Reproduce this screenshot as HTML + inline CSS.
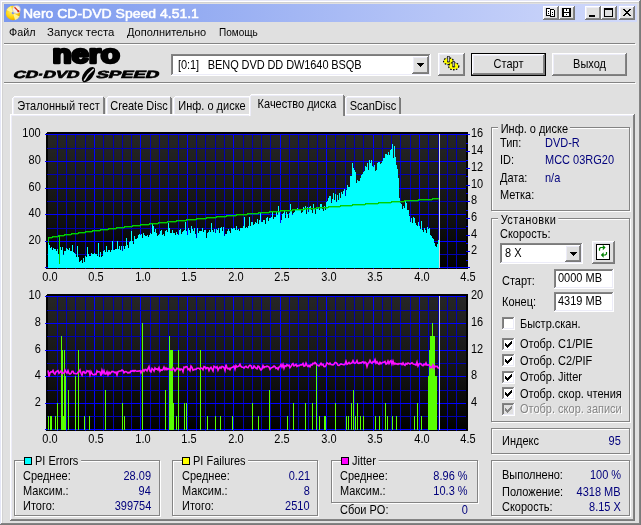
<!DOCTYPE html>
<html><head><meta charset="utf-8"><title>Nero CD-DVD Speed 4.51.1</title><style>html,body{margin:0;padding:0}
body{width:641px;height:525px;overflow:hidden;background:#e0e0e0;font:11px "Liberation Sans",sans-serif;position:relative;color:#000}
.a{position:absolute}
.t{position:absolute;white-space:pre;line-height:13px;height:13px;font-size:12.4px;transform:scaleX(0.8871);transform-origin:0 0}
.t.r{transform-origin:100% 0}
.t.c{transform-origin:50% 0}
.arrow{position:absolute;width:0;height:0;border-left:4px solid transparent;border-right:4px solid transparent;border-top:4px solid #000}
</style></head><body>
<div id="w" style="position:absolute;left:0;top:0;width:641px;height:525px;will-change:transform;opacity:0.999">
<div class="a" style="left:0;top:0;width:641px;height:525px;box-shadow:inset -1px -1px 0 #7a7a7a,inset 1px 1px 0 #e4e6f6,inset -2px -2px 0 #848484,inset 2px 2px 0 #ffffff;"></div>
<div class="a" style="left:2px;top:2px;width:1px;height:521px;background:#d2d2d2"></div>
<div class="a" style="left:2px;top:2px;width:637px;height:1px;background:#d2d2d2"></div>
<div class="a" style="left:4px;top:4px;width:633px;height:18px;background:linear-gradient(to right,#7a98ee 0%,#d2dafb 100%);"></div>
<svg class="a" style="left:5px;top:4px" width="18" height="18" viewBox="0 0 18 18">
<defs><radialGradient id="dg" cx="0.4" cy="0.4" r="0.7"><stop offset="0" stop-color="#fff080"/><stop offset="0.6" stop-color="#ffd000"/><stop offset="1" stop-color="#d89800"/></radialGradient></defs>
<circle cx="8" cy="9" r="7.2" fill="url(#dg)"/>
<path d="M8 9 L1.5 6 A7.2 7.2 0 0 1 6 2.2 Z" fill="#fff8a0" opacity="0.9"/>
<path d="M8 9 L14.5 12.5 A7.2 7.2 0 0 1 10 16 Z" fill="#fff8a0" opacity="0.9"/>
<circle cx="8" cy="9" r="1.3" fill="#8098e0"/>
<circle cx="11.5" cy="5.5" r="3.9" fill="#f4f0ec" stroke="#c8c0b8" stroke-width="0.6"/>
<path d="M9.5 3.2 L13.6 7.4" stroke="#e03010" stroke-width="1.3"/>
<circle cx="13.4" cy="7.2" r="1" fill="#d02010"/>
</svg>
<div class="a" style="left:23px;top:6px;height:16px;line-height:16px;font-weight:normal;font-size:13.6px;-webkit-text-stroke:0.55px #fff;color:#fff;white-space:pre;transform:scaleX(1.03);transform-origin:0 0">Nero CD-DVD Speed 4.51.1</div>
<div class="a " style="left:543px;top:6px;width:16px;height:14px;box-shadow:inset -1px -1px 0 #7a7a7a,inset 1px 1px 0 #ffffff,inset -2px -2px 0 #848484,inset 2px 2px 0 #ececf8;background:#e0e0e0;"><svg class="a" style="left:0;top:0" width="16" height="14" viewBox="0 0 16 14" shape-rendering="crispEdges"><path d="M3.5 2.5h3l1 1v6h-4z" fill="#fff" stroke="#000"/><path d="M7.5 3.5h3l1 1v6h-4z" fill="#fff" stroke="#000"/><path d="M5 5h1M5 7h1M9 6h1M9 8h1" stroke="#000"/></svg></div>
<div class="a " style="left:559px;top:6px;width:16px;height:14px;box-shadow:inset -1px -1px 0 #7a7a7a,inset 1px 1px 0 #ffffff,inset -2px -2px 0 #848484,inset 2px 2px 0 #ececf8;background:#e0e0e0;"><svg class="a" style="left:0;top:0" width="16" height="14" viewBox="0 0 16 14" shape-rendering="crispEdges"><rect x="3" y="2" width="9" height="9" fill="#000"/><rect x="5" y="3" width="5" height="3" fill="#fff"/><rect x="7" y="2" width="1" height="3" fill="#000"/><rect x="5" y="7" width="5" height="3" fill="#fff"/><rect x="7" y="8" width="1" height="1" fill="#000"/></svg></div>
<div class="a " style="left:585px;top:6px;width:16px;height:14px;box-shadow:inset -1px -1px 0 #7a7a7a,inset 1px 1px 0 #ffffff,inset -2px -2px 0 #848484,inset 2px 2px 0 #ececf8;background:#e0e0e0;"><div class="a" style="left:4px;top:9px;width:6px;height:2px;background:#000"></div></div>
<div class="a " style="left:601px;top:6px;width:16px;height:14px;box-shadow:inset -1px -1px 0 #7a7a7a,inset 1px 1px 0 #ffffff,inset -2px -2px 0 #848484,inset 2px 2px 0 #ececf8;background:#e0e0e0;"><div class="a" style="left:3px;top:2px;width:9px;height:9px;box-sizing:border-box;border:1px solid #000;border-top-width:2px"></div></div>
<div class="a " style="left:619px;top:6px;width:16px;height:14px;box-shadow:inset -1px -1px 0 #7a7a7a,inset 1px 1px 0 #ffffff,inset -2px -2px 0 #848484,inset 2px 2px 0 #ececf8;background:#e0e0e0;"><svg class="a" style="left:0;top:0" width="16" height="14" viewBox="0 0 16 14" shape-rendering="crispEdges"><path d="M4 3h2v1h1v1h2v-1h1v-1h2v1h-1v1h-1v1h-1v1h1v1h1v1h1v1h-2v-1h-1v-1h-2v1h-1v1h-2v-1h1v-1h1v-1h1v-1h-1v-1h-1v-1h-1z" fill="#000"/></svg></div>
<div class="t" style="left:9px;top:26px;font-size:11.4px;transform:scaleX(0.946)">Файл</div>
<div class="t" style="left:47px;top:26px;font-size:11.4px;transform:scaleX(1.0)">Запуск теста</div>
<div class="t" style="left:127px;top:26px;font-size:11.4px;transform:scaleX(0.966)">Дополнительно</div>
<div class="t" style="left:219px;top:26px;font-size:11.4px;transform:scaleX(0.882)">Помощь</div>
<div class="a" style="left:4px;top:43px;width:631px;height:1px;background:#848484"></div>
<div class="a" style="left:4px;top:44px;width:632px;height:1px;background:#fff"></div>
<div class="a" style="left:4px;top:82px;width:631px;height:1px;background:#848484"></div>
<div class="a" style="left:4px;top:83px;width:632px;height:1px;background:#fff"></div>
<svg class="a" style="left:0;top:44px" width="170" height="40" viewBox="0 44 170 40">
<text x="52.4" y="62.7" font-family="Liberation Sans, sans-serif" font-weight="bold" font-size="25" textLength="67.5" lengthAdjust="spacingAndGlyphs" stroke="#000" stroke-width="2.7" stroke-linejoin="round" fill="#000">nero</text>
<g transform="translate(0,78.4) skewX(-20)" stroke="#000" stroke-width="0.7">
<text x="12.4" y="0" font-family="Liberation Sans, sans-serif" font-weight="bold" font-size="10.4" textLength="66" lengthAdjust="spacingAndGlyphs" fill="#000">CD·DVD</text>
<text x="95.6" y="0" font-family="Liberation Sans, sans-serif" font-weight="bold" font-size="10.4" textLength="62.5" lengthAdjust="spacingAndGlyphs" fill="#000">SPEED</text>
</g>
<g transform="translate(88.5,74.6) rotate(38)"><ellipse cx="0" cy="0" rx="4.6" ry="9" fill="#000"/><path d="M0.8 -7.5 Q-1 0 0.3 7.5" stroke="#e0e0e0" stroke-width="1.5" fill="none"/></g>
</svg>
<div class="a " style="left:171px;top:54px;width:260px;height:22px;box-shadow:inset -1px -1px 0 #ffffff,inset 1px 1px 0 #848484,inset -2px -2px 0 #ececf8,inset 2px 2px 0 #7a7a7a;background:#fff;"></div>
<div class="t " style="left:178px;top:59px;color:#000;letter-spacing:-0.1px;">[0:1]&nbsp;&nbsp;&nbsp;BENQ DVD DD DW1640 BSQB</div>
<div class="a " style="left:412px;top:56px;width:17px;height:18px;box-shadow:inset -1px -1px 0 #7a7a7a,inset 1px 1px 0 #ffffff,inset -2px -2px 0 #848484,inset 2px 2px 0 #ececf8;background:#e0e0e0;"><svg class="a" style="left:5px;top:7px" width="7" height="4" viewBox="0 0 7 4" shape-rendering="crispEdges"><path d="M0 0h7v1h-1v1h-1v1h-1v1h-1v-1h-1v-1h-1v-1h-1z" fill="#000"/></svg></div>
<div class="a " style="left:438px;top:53px;width:27px;height:23px;box-shadow:inset -1px -1px 0 #7a7a7a,inset 1px 1px 0 #ffffff,inset -2px -2px 0 #848484,inset 2px 2px 0 #ececf8;background:#e0e0e0;"><svg class="a" style="left:0;top:0" width="27" height="23" viewBox="0 0 27 23">
<ellipse cx="10.5" cy="8.2" rx="4.6" ry="3.1" fill="#ffff00" stroke="#000" stroke-width="1.8" stroke-dasharray="1.5 1.2"/>
<ellipse cx="10.5" cy="8.2" rx="4.2" ry="2.7" fill="#ffff00"/>
<ellipse cx="10.5" cy="8.6" rx="1.6" ry="1" fill="#404000"/>
<rect x="9.6" y="3.4" width="1.8" height="5.4" fill="#c8c8d4" stroke="#282828" stroke-width="0.7"/>
<ellipse cx="15.7" cy="13.2" rx="4.8" ry="3.3" fill="#ffff00" stroke="#000" stroke-width="1.8" stroke-dasharray="1.5 1.2"/>
<ellipse cx="15.7" cy="13.2" rx="4.4" ry="2.9" fill="#ffff00"/>
<ellipse cx="15.7" cy="13.6" rx="1.6" ry="1" fill="#404000"/>
<rect x="14.8" y="8.4" width="1.8" height="5.4" fill="#c8c8d4" stroke="#282828" stroke-width="0.7"/>
</svg></div>
<div class="a " style="left:471px;top:53px;width:75px;height:23px;background:#000;"></div>
<div class="a " style="left:472px;top:54px;width:73px;height:21px;box-shadow:inset -1px -1px 0 #7a7a7a,inset 1px 1px 0 #ffffff,inset -2px -2px 0 #848484,inset 2px 2px 0 #ececf8;background:#e0e0e0;"></div>
<div class="t c" style="left:472px;width:73px;text-align:center;top:58px;">Старт</div>
<div class="a " style="left:552px;top:53px;width:75px;height:23px;box-shadow:inset -1px -1px 0 #7a7a7a,inset 1px 1px 0 #ffffff,inset -2px -2px 0 #848484,inset 2px 2px 0 #ececf8;background:#e0e0e0;"></div>
<div class="t c" style="left:552px;width:75px;text-align:center;top:58px;">Выход</div>
<div class="a" style="left:10px;top:114px;width:625px;height:407px;background:#e0e0e0;box-shadow:inset -1px -1px 0 #7a7a7a,inset 1px 1px 0 #ffffff,inset -2px -2px 0 #848484,inset 2px 2px 0 #ececf8;"></div>
<div class="a" style="left:12px;top:96px;width:93px;height:18px;background:#e0e0e0;box-shadow:inset -1px 0 0 #7a7a7a,inset 1px 1px 0 #ffffff,inset -2px 0 0 #848484,inset 2px 2px 0 #ececf8;"></div>
<div class="a" style="left:12px;top:96px;width:2px;height:2px;background:#e0e0e0"></div><div class="a" style="left:13px;top:97px;width:1px;height:1px;background:#ffffff"></div>
<div class="a" style="left:103px;top:96px;width:2px;height:2px;background:#e0e0e0"></div><div class="a" style="left:103px;top:97px;width:1px;height:1px;background:#7a7a7a"></div>
<div class="t c" style="left:12px;width:93px;text-align:center;top:100px;">Эталонный тест</div>
<div class="a" style="left:106px;top:96px;width:66px;height:18px;background:#e0e0e0;box-shadow:inset -1px 0 0 #7a7a7a,inset 1px 1px 0 #ffffff,inset -2px 0 0 #848484,inset 2px 2px 0 #ececf8;"></div>
<div class="a" style="left:106px;top:96px;width:2px;height:2px;background:#e0e0e0"></div><div class="a" style="left:107px;top:97px;width:1px;height:1px;background:#ffffff"></div>
<div class="a" style="left:170px;top:96px;width:2px;height:2px;background:#e0e0e0"></div><div class="a" style="left:170px;top:97px;width:1px;height:1px;background:#7a7a7a"></div>
<div class="t c" style="left:106px;width:66px;text-align:center;top:100px;">Create Disc</div>
<div class="a" style="left:173px;top:96px;width:78px;height:18px;background:#e0e0e0;box-shadow:inset -1px 0 0 #7a7a7a,inset 1px 1px 0 #ffffff,inset -2px 0 0 #848484,inset 2px 2px 0 #ececf8;"></div>
<div class="a" style="left:173px;top:96px;width:2px;height:2px;background:#e0e0e0"></div><div class="a" style="left:174px;top:97px;width:1px;height:1px;background:#ffffff"></div>
<div class="a" style="left:249px;top:96px;width:2px;height:2px;background:#e0e0e0"></div><div class="a" style="left:249px;top:97px;width:1px;height:1px;background:#7a7a7a"></div>
<div class="t c" style="left:173px;width:78px;text-align:center;top:100px;">Инф. о диске</div>
<div class="a" style="left:345px;top:96px;width:56px;height:18px;background:#e0e0e0;box-shadow:inset -1px 0 0 #7a7a7a,inset 1px 1px 0 #ffffff,inset -2px 0 0 #848484,inset 2px 2px 0 #ececf8;"></div>
<div class="a" style="left:345px;top:96px;width:2px;height:2px;background:#e0e0e0"></div><div class="a" style="left:346px;top:97px;width:1px;height:1px;background:#ffffff"></div>
<div class="a" style="left:399px;top:96px;width:2px;height:2px;background:#e0e0e0"></div><div class="a" style="left:399px;top:97px;width:1px;height:1px;background:#7a7a7a"></div>
<div class="t c" style="left:345px;width:56px;text-align:center;top:100px;">ScanDisc</div>
<div class="a" style="left:249px;top:94px;width:96px;height:22px;background:#e0e0e0;box-shadow:inset -1px 0 0 #7a7a7a,inset 1px 1px 0 #ffffff,inset -2px 0 0 #848484,inset 2px 2px 0 #ececf8;"></div>
<div class="a" style="left:249px;top:94px;width:2px;height:2px;background:#e0e0e0"></div><div class="a" style="left:250px;top:95px;width:1px;height:1px;background:#ffffff"></div>
<div class="a" style="left:343px;top:94px;width:2px;height:2px;background:#e0e0e0"></div><div class="a" style="left:343px;top:95px;width:1px;height:1px;background:#7a7a7a"></div>
<div class="t c" style="left:249px;width:96px;text-align:center;top:98px;">Качество диска</div>
<svg class="a" style="left:0;top:120px" width="490" height="330" viewBox="0 120 490 330" shape-rendering="crispEdges"><defs><linearGradient id="cg" x1="0" y1="0" x2="0" y2="1"><stop offset="0" stop-color="#262626"/><stop offset="0.55" stop-color="#141414"/><stop offset="1" stop-color="#000"/></linearGradient></defs><rect x="46" y="132" width="422" height="137" fill="#000"/><rect x="48" y="134" width="418" height="134" fill="url(#cg)"/><rect x="46" y="132" width="1" height="1" fill="#e0e0e0"/><rect x="57" y="134" width="1" height="135" fill="#0000b0"/><rect x="66" y="134" width="1" height="135" fill="#0000b0"/><rect x="75" y="134" width="1" height="135" fill="#0000b0"/><rect x="85" y="134" width="1" height="135" fill="#0000b0"/><rect x="94" y="134" width="1" height="135" fill="#0000ff"/><rect x="103" y="134" width="1" height="135" fill="#0000b0"/><rect x="113" y="134" width="1" height="135" fill="#0000b0"/><rect x="122" y="134" width="1" height="135" fill="#0000b0"/><rect x="131" y="134" width="1" height="135" fill="#0000b0"/><rect x="140" y="134" width="1" height="135" fill="#0000ff"/><rect x="150" y="134" width="1" height="135" fill="#0000b0"/><rect x="159" y="134" width="1" height="135" fill="#0000b0"/><rect x="168" y="134" width="1" height="135" fill="#0000b0"/><rect x="178" y="134" width="1" height="135" fill="#0000b0"/><rect x="187" y="134" width="1" height="135" fill="#0000ff"/><rect x="196" y="134" width="1" height="135" fill="#0000b0"/><rect x="205" y="134" width="1" height="135" fill="#0000b0"/><rect x="215" y="134" width="1" height="135" fill="#0000b0"/><rect x="224" y="134" width="1" height="135" fill="#0000b0"/><rect x="233" y="134" width="1" height="135" fill="#0000ff"/><rect x="243" y="134" width="1" height="135" fill="#0000b0"/><rect x="252" y="134" width="1" height="135" fill="#0000b0"/><rect x="261" y="134" width="1" height="135" fill="#0000b0"/><rect x="270" y="134" width="1" height="135" fill="#0000b0"/><rect x="280" y="134" width="1" height="135" fill="#0000ff"/><rect x="289" y="134" width="1" height="135" fill="#0000b0"/><rect x="298" y="134" width="1" height="135" fill="#0000b0"/><rect x="308" y="134" width="1" height="135" fill="#0000b0"/><rect x="317" y="134" width="1" height="135" fill="#0000b0"/><rect x="326" y="134" width="1" height="135" fill="#0000ff"/><rect x="335" y="134" width="1" height="135" fill="#0000b0"/><rect x="345" y="134" width="1" height="135" fill="#0000b0"/><rect x="354" y="134" width="1" height="135" fill="#0000b0"/><rect x="363" y="134" width="1" height="135" fill="#0000b0"/><rect x="373" y="134" width="1" height="135" fill="#0000ff"/><rect x="382" y="134" width="1" height="135" fill="#0000b0"/><rect x="391" y="134" width="1" height="135" fill="#0000b0"/><rect x="400" y="134" width="1" height="135" fill="#0000b0"/><rect x="410" y="134" width="1" height="135" fill="#0000b0"/><rect x="419" y="134" width="1" height="135" fill="#0000ff"/><rect x="428" y="134" width="1" height="135" fill="#0000b0"/><rect x="438" y="134" width="1" height="135" fill="#0000b0"/><rect x="447" y="134" width="1" height="135" fill="#0000b0"/><rect x="456" y="134" width="1" height="135" fill="#0000b0"/><rect x="45" y="134" width="421" height="1" fill="#0000ff"/><rect x="47" y="148" width="419" height="1" fill="#0000b0"/><rect x="45" y="161" width="421" height="1" fill="#0000ff"/><rect x="47" y="174" width="419" height="1" fill="#0000b0"/><rect x="45" y="188" width="421" height="1" fill="#0000ff"/><rect x="47" y="201" width="419" height="1" fill="#0000b0"/><rect x="45" y="214" width="421" height="1" fill="#0000ff"/><rect x="47" y="228" width="419" height="1" fill="#0000b0"/><rect x="45" y="241" width="421" height="1" fill="#0000ff"/><rect x="47" y="254" width="419" height="1" fill="#0000b0"/><rect x="45" y="267" width="421" height="1" fill="#0000ff"/><rect x="466" y="267" width="4" height="1" fill="#0000ff"/><rect x="466" y="260" width="2" height="1" fill="#0000ff"/><rect x="466" y="251" width="4" height="1" fill="#0000ff"/><rect x="466" y="243" width="2" height="1" fill="#0000ff"/><rect x="466" y="235" width="4" height="1" fill="#0000ff"/><rect x="466" y="226" width="2" height="1" fill="#0000ff"/><rect x="466" y="218" width="4" height="1" fill="#0000ff"/><rect x="466" y="210" width="2" height="1" fill="#0000ff"/><rect x="466" y="201" width="4" height="1" fill="#0000ff"/><rect x="466" y="193" width="2" height="1" fill="#0000ff"/><rect x="466" y="185" width="4" height="1" fill="#0000ff"/><rect x="466" y="176" width="2" height="1" fill="#0000ff"/><rect x="466" y="168" width="4" height="1" fill="#0000ff"/><rect x="466" y="160" width="2" height="1" fill="#0000ff"/><rect x="466" y="151" width="4" height="1" fill="#0000ff"/><rect x="466" y="143" width="2" height="1" fill="#0000ff"/><rect x="466" y="134" width="4" height="1" fill="#0000ff"/><path d="M48,268V241H49V245H50V248H51V247H52V250H53V248H54V249H55V249H56V251H57V249H58V254H59V251H60V247H61V250H62V247H63V255H64V251H65V251H66V248H67V249H68V250H69V248H70V251H71V251H72V245H73V252H74V253H75V254H76V257H77V246H78V257H79V262H80V261H81V260H82V263H83V258H84V262H85V256H86V257H87V247H88V254H89V256H90V256H91V253H92V254H93V254H94V253H95V254H96V254H97V256H98V243H99V257H100V252H101V257H102V256H103V251H104V250H105V252H106V246H107V252H108V250H109V250H110V252H111V250H112V241H113V250H114V250H115V249H116V249H117V241H118V249H119V246H120V250H121V246H122V251H123V246H124V249H125V246H126V238H127V245H128V248H129V242H130V241H131V231H132V241H133V244H134V236H135V239H136V239H137V238H138V235H139V234H140V235H141V234H142V238H143V233H144V235H145V236H146V236H147V235H148V237H149V235H150V233H151V234H152V224H153V226H154V232H155V229H156V233H157V236H158V235H159V234H160V231H161V230H162V235H163V234H164V236H165V231H166V230H167V232H168V223H169V228H170V233H171V233H172V230H173V233H174V233H175V235H176V232H177V234H178V235H179V230H180V229H181V234H182V232H183V231H184V230H185V222H186V231H187V235H188V228H189V230H190V233H191V226H192V229H193V231H194V228H195V234H196V238H197V228H198V233H199V231H200V231H201V231H202V228H203V232H204V230H205V230H206V238H207V233H208V232H209V230H210V232H211V223H212V230H213V232H214V229H215V233H216V229H217V230H218V228H219V233H220V228H221V227H222V231H223V227H224V236H225V234H226V234H227V231H228V229H229V231H230V233H231V228H232V229H233V228H234V228H235V230H236V226H237V230H238V229H239V231H240V228H241V228H242V228H243V226H244V217H245V228H246V227H247V228H248V226H249V217H250V226H251V222H252V222H253V225H254V224H255V222H256V223H257V219H258V224H259V220H260V213H261V222H262V222H263V220H264V220H265V224H266V218H267V217H268V221H269V218H270V218H271V217H272V212H273V219H274V217H275V217H276V211H277V215H278V206H279V212H280V223H281V220H282V214H283V213H284V211H285V218H286V212H287V214H288V218H289V213H290V204H291V210H292V215H293V213H294V212H295V210H296V210H297V208H298V209H299V209H300V209H301V213H302V212H303V207H304V209H305V206H306V214H307V207H308V212H309V207H310V206H311V210H312V213H313V204H314V208H315V214H316V209H317V209H318V207H319V210H320V204H321V204H322V209H323V211H324V206H325V210H326V202H327V201H328V198H329V196H330V196H331V203H332V199H333V193H334V200H335V194H336V202H337V195H338V200H339V193H340V198H341V192H342V194H343V191H344V189H345V196H346V190H347V185H348V187H349V187H350V176H351V176H352V163H353V168H354V170H355V172H356V183H357V180H358V181H359V181H360V178H361V175H362V174H363V172H364V171H365V166H366V167H367V163H368V170H369V160H370V163H371V160H372V166H373V167H374V165H375V171H376V170H377V163H378V162H379V162H380V164H381V163H382V161H383V158H384V158H385V154H386V154H387V155H388V152H389V155H390V150H391V149H392V144H393V158H394V146H395V157H396V165H397V169H398V178H399V198H400V203H401V204H402V209H403V206H404V208H405V201H406V203H407V210H408V210H409V216H410V222H411V218H412V223H413V217H414V218H415V223H416V225H417V226H418V222H419V226H420V229H421V221H422V230H423V232H424V228H425V230H426V233H427V227H428V229H429V228H430V235H431V236H432V238H433V239H434V243H435V246H436V247H437V244H438V240H439V268Z" fill="#00ffff"/><path d="M48 237h1v1h-1zM49 237h1v1h-1zM50 237h1v1h-1zM51 237h1v1h-1zM52 236h1v2h-1zM53 236h1v1h-1zM54 236h1v1h-1zM55 236h1v1h-1zM56 236h1v1h-1zM57 236h1v1h-1zM58 235h1v2h-1zM59 235h1v1h-1zM60 235h1v1h-1zM61 235h1v1h-1zM62 235h1v1h-1zM63 235h1v1h-1zM64 234h1v2h-1zM65 234h1v1h-1zM66 234h1v1h-1zM67 234h1v1h-1zM68 234h1v1h-1zM69 234h1v1h-1zM70 234h1v1h-1zM71 233h1v2h-1zM72 233h1v1h-1zM73 233h1v1h-1zM74 233h1v1h-1zM75 233h1v1h-1zM76 233h1v1h-1zM77 233h1v1h-1zM78 232h1v2h-1zM79 232h1v1h-1zM80 232h1v1h-1zM81 232h1v1h-1zM82 232h1v1h-1zM83 232h1v1h-1zM84 232h1v1h-1zM85 231h1v2h-1zM86 231h1v1h-1zM87 231h1v1h-1zM88 231h1v1h-1zM89 231h1v1h-1zM90 231h1v1h-1zM91 231h1v1h-1zM92 230h1v2h-1zM93 230h1v1h-1zM94 230h1v1h-1zM95 230h1v1h-1zM96 230h1v1h-1zM97 230h1v1h-1zM98 230h1v1h-1zM99 230h1v1h-1zM100 229h1v2h-1zM101 229h1v1h-1zM102 229h1v1h-1zM103 229h1v1h-1zM104 229h1v1h-1zM105 229h1v1h-1zM106 229h1v1h-1zM107 229h1v1h-1zM108 228h1v2h-1zM109 228h1v1h-1zM110 228h1v1h-1zM111 228h1v1h-1zM112 228h1v1h-1zM113 228h1v1h-1zM114 228h1v1h-1zM115 228h1v1h-1zM116 227h1v2h-1zM117 227h1v1h-1zM118 227h1v1h-1zM119 227h1v1h-1zM120 227h1v1h-1zM121 227h1v1h-1zM122 227h1v1h-1zM123 227h1v1h-1zM124 226h1v2h-1zM125 226h1v1h-1zM126 226h1v1h-1zM127 226h1v1h-1zM128 226h1v1h-1zM129 226h1v1h-1zM130 226h1v1h-1zM131 226h1v1h-1zM132 225h1v2h-1zM133 225h1v1h-1zM134 225h1v1h-1zM135 225h1v1h-1zM136 225h1v1h-1zM137 225h1v1h-1zM138 225h1v1h-1zM139 225h1v1h-1zM140 224h1v2h-1zM141 224h1v1h-1zM142 224h1v1h-1zM143 224h1v1h-1zM144 224h1v1h-1zM145 224h1v1h-1zM146 224h1v1h-1zM147 224h1v1h-1zM148 224h1v1h-1zM149 223h1v2h-1zM150 223h1v1h-1zM151 223h1v1h-1zM152 223h1v1h-1zM153 223h1v1h-1zM154 223h1v1h-1zM155 223h1v1h-1zM156 223h1v1h-1zM157 223h1v1h-1zM158 222h1v2h-1zM159 222h1v1h-1zM160 222h1v1h-1zM161 222h1v1h-1zM162 222h1v1h-1zM163 222h1v1h-1zM164 222h1v1h-1zM165 222h1v1h-1zM166 222h1v1h-1zM167 221h1v2h-1zM168 221h1v1h-1zM169 221h1v1h-1zM170 221h1v1h-1zM171 221h1v1h-1zM172 221h1v1h-1zM173 221h1v1h-1zM174 221h1v1h-1zM175 221h1v1h-1zM176 220h1v2h-1zM177 220h1v1h-1zM178 220h1v1h-1zM179 220h1v1h-1zM180 220h1v1h-1zM181 220h1v1h-1zM182 220h1v1h-1zM183 220h1v1h-1zM184 220h1v1h-1zM185 220h1v1h-1zM186 219h1v2h-1zM187 219h1v1h-1zM188 219h1v1h-1zM189 219h1v1h-1zM190 219h1v1h-1zM191 219h1v1h-1zM192 219h1v1h-1zM193 219h1v1h-1zM194 219h1v1h-1zM195 219h1v1h-1zM196 218h1v2h-1zM197 218h1v1h-1zM198 218h1v1h-1zM199 218h1v1h-1zM200 218h1v1h-1zM201 218h1v1h-1zM202 218h1v1h-1zM203 218h1v1h-1zM204 218h1v1h-1zM205 218h1v1h-1zM206 217h1v2h-1zM207 217h1v1h-1zM208 217h1v1h-1zM209 217h1v1h-1zM210 217h1v1h-1zM211 217h1v1h-1zM212 217h1v1h-1zM213 217h1v1h-1zM214 217h1v1h-1zM215 217h1v1h-1zM216 216h1v2h-1zM217 216h1v1h-1zM218 216h1v1h-1zM219 216h1v1h-1zM220 216h1v1h-1zM221 216h1v1h-1zM222 216h1v1h-1zM223 216h1v1h-1zM224 216h1v1h-1zM225 216h1v1h-1zM226 215h1v2h-1zM227 215h1v1h-1zM228 215h1v1h-1zM229 215h1v1h-1zM230 215h1v1h-1zM231 215h1v1h-1zM232 215h1v1h-1zM233 215h1v1h-1zM234 215h1v1h-1zM235 215h1v1h-1zM236 214h1v2h-1zM237 214h1v1h-1zM238 214h1v1h-1zM239 214h1v1h-1zM240 214h1v1h-1zM241 214h1v1h-1zM242 214h1v1h-1zM243 214h1v1h-1zM244 214h1v1h-1zM245 214h1v1h-1zM246 214h1v1h-1zM247 213h1v2h-1zM248 213h1v1h-1zM249 213h1v1h-1zM250 213h1v1h-1zM251 213h1v1h-1zM252 213h1v1h-1zM253 213h1v1h-1zM254 213h1v1h-1zM255 213h1v1h-1zM256 213h1v1h-1zM257 213h1v1h-1zM258 212h1v2h-1zM259 212h1v1h-1zM260 212h1v1h-1zM261 212h1v1h-1zM262 212h1v1h-1zM263 212h1v1h-1zM264 212h1v1h-1zM265 212h1v1h-1zM266 212h1v1h-1zM267 212h1v1h-1zM268 212h1v1h-1zM269 211h1v2h-1zM270 211h1v1h-1zM271 211h1v1h-1zM272 211h1v1h-1zM273 211h1v1h-1zM274 211h1v1h-1zM275 211h1v1h-1zM276 211h1v1h-1zM277 211h1v1h-1zM278 211h1v1h-1zM279 211h1v1h-1zM280 210h1v2h-1zM281 210h1v1h-1zM282 210h1v1h-1zM283 210h1v1h-1zM284 210h1v1h-1zM285 210h1v1h-1zM286 210h1v1h-1zM287 210h1v1h-1zM288 210h1v1h-1zM289 210h1v1h-1zM290 210h1v1h-1zM291 210h1v1h-1zM292 209h1v2h-1zM293 209h1v1h-1zM294 209h1v1h-1zM295 209h1v1h-1zM296 209h1v1h-1zM297 209h1v1h-1zM298 209h1v1h-1zM299 209h1v1h-1zM300 209h1v1h-1zM301 209h1v1h-1zM302 209h1v1h-1zM303 209h1v1h-1zM304 208h1v2h-1zM305 208h1v1h-1zM306 208h1v1h-1zM307 208h1v1h-1zM308 208h1v1h-1zM309 208h1v1h-1zM310 208h1v1h-1zM311 208h1v1h-1zM312 208h1v1h-1zM313 208h1v1h-1zM314 208h1v1h-1zM315 208h1v1h-1zM316 207h1v2h-1zM317 207h1v1h-1zM318 207h1v1h-1zM319 207h1v1h-1zM320 207h1v1h-1zM321 207h1v1h-1zM322 207h1v1h-1zM323 207h1v1h-1zM324 207h1v1h-1zM325 207h1v1h-1zM326 207h1v1h-1zM327 207h1v1h-1zM328 206h1v2h-1zM329 206h1v1h-1zM330 206h1v1h-1zM331 206h1v1h-1zM332 206h1v1h-1zM333 206h1v1h-1zM334 206h1v1h-1zM335 206h1v1h-1zM336 206h1v1h-1zM337 206h1v1h-1zM338 206h1v1h-1zM339 206h1v1h-1zM340 205h1v2h-1zM341 205h1v1h-1zM342 205h1v1h-1zM343 205h1v1h-1zM344 205h1v1h-1zM345 205h1v1h-1zM346 205h1v1h-1zM347 205h1v1h-1zM348 205h1v1h-1zM349 205h1v1h-1zM350 205h1v1h-1zM351 205h1v1h-1zM352 204h1v2h-1zM353 204h1v1h-1zM354 204h1v1h-1zM355 204h1v1h-1zM356 204h1v1h-1zM357 204h1v1h-1zM358 204h1v1h-1zM359 204h1v1h-1zM360 204h1v1h-1zM361 204h1v1h-1zM362 204h1v1h-1zM363 204h1v1h-1zM364 204h1v1h-1zM365 203h1v2h-1zM366 203h1v1h-1zM367 203h1v1h-1zM368 203h1v1h-1zM369 203h1v1h-1zM370 203h1v1h-1zM371 203h1v1h-1zM372 203h1v1h-1zM373 203h1v1h-1zM374 203h1v1h-1zM375 203h1v1h-1zM376 203h1v1h-1zM377 203h1v1h-1zM378 202h1v2h-1zM379 202h1v1h-1zM380 202h1v1h-1zM381 202h1v1h-1zM382 202h1v1h-1zM383 202h1v1h-1zM384 202h1v1h-1zM385 202h1v1h-1zM386 202h1v1h-1zM387 202h1v1h-1zM388 202h1v1h-1zM389 202h1v1h-1zM390 202h1v1h-1zM391 201h1v2h-1zM392 201h1v1h-1zM393 201h1v1h-1zM394 201h1v1h-1zM395 201h1v1h-1zM396 201h1v1h-1zM397 201h1v1h-1zM398 201h1v1h-1zM399 201h1v1h-1zM400 201h1v1h-1zM401 201h1v1h-1zM402 201h1v1h-1zM403 201h1v1h-1zM404 200h1v2h-1zM405 200h1v1h-1zM406 200h1v1h-1zM407 200h1v1h-1zM408 200h1v1h-1zM409 200h1v1h-1zM410 200h1v1h-1zM411 200h1v1h-1zM412 200h1v1h-1zM413 200h1v1h-1zM414 200h1v1h-1zM415 200h1v1h-1zM416 200h1v1h-1zM417 200h1v1h-1zM418 199h1v2h-1zM419 199h1v1h-1zM420 199h1v1h-1zM421 199h1v1h-1zM422 199h1v1h-1zM423 199h1v1h-1zM424 199h1v1h-1zM425 199h1v1h-1zM426 199h1v1h-1zM427 199h1v1h-1zM428 199h1v1h-1zM429 199h1v1h-1zM430 199h1v1h-1zM431 199h1v1h-1zM432 198h1v2h-1zM433 198h1v1h-1zM434 198h1v1h-1zM435 198h1v1h-1zM436 198h1v1h-1zM437 198h1v1h-1zM438 198h1v1h-1z" fill="#00d000"/><path d="M48 238h1v1h-1zM49 238h1v1h-1zM50 238h1v1h-1zM51 238h1v1h-1zM52 237h1v1h-1zM53 237h1v1h-1zM54 237h1v1h-1zM55 237h1v1h-1zM56 237h1v1h-1zM57 237h1v1h-1zM58 236h1v1h-1zM59 236h1v1h-1zM60 236h1v1h-1zM61 236h1v1h-1zM62 236h1v1h-1zM63 236h1v1h-1zM64 235h1v1h-1zM65 235h1v1h-1zM66 235h1v1h-1zM67 235h1v1h-1zM68 235h1v1h-1zM69 235h1v1h-1zM70 235h1v1h-1zM71 234h1v1h-1zM72 234h1v1h-1zM73 234h1v1h-1zM74 234h1v1h-1zM75 234h1v1h-1zM76 234h1v1h-1zM77 234h1v1h-1zM78 233h1v1h-1zM79 233h1v1h-1zM80 233h1v1h-1zM81 233h1v1h-1zM82 233h1v1h-1zM83 233h1v1h-1zM84 233h1v1h-1zM85 232h1v1h-1zM86 232h1v1h-1zM87 232h1v1h-1zM88 232h1v1h-1zM89 232h1v1h-1zM90 232h1v1h-1zM91 232h1v1h-1zM92 231h1v1h-1zM93 231h1v1h-1zM94 231h1v1h-1zM95 231h1v1h-1zM96 231h1v1h-1zM97 231h1v1h-1zM98 231h1v1h-1zM99 231h1v1h-1zM100 230h1v1h-1zM101 230h1v1h-1zM102 230h1v1h-1zM103 230h1v1h-1zM104 230h1v1h-1zM105 230h1v1h-1zM106 230h1v1h-1zM107 230h1v1h-1zM108 229h1v1h-1zM109 229h1v1h-1zM110 229h1v1h-1zM111 229h1v1h-1zM112 229h1v1h-1zM113 229h1v1h-1zM114 229h1v1h-1zM115 229h1v1h-1zM116 228h1v1h-1zM117 228h1v1h-1zM118 228h1v1h-1zM119 228h1v1h-1zM120 228h1v1h-1zM121 228h1v1h-1zM122 228h1v1h-1zM123 228h1v1h-1zM124 227h1v1h-1zM125 227h1v1h-1zM126 227h1v1h-1zM127 227h1v1h-1zM128 227h1v1h-1zM129 227h1v1h-1zM130 227h1v1h-1zM131 227h1v1h-1zM132 226h1v1h-1zM133 226h1v1h-1zM134 226h1v1h-1zM135 226h1v1h-1zM136 226h1v1h-1zM137 226h1v1h-1zM138 226h1v1h-1zM139 226h1v1h-1zM140 225h1v1h-1zM141 225h1v1h-1zM142 225h1v1h-1zM143 225h1v1h-1zM144 225h1v1h-1zM145 225h1v1h-1zM146 225h1v1h-1zM147 225h1v1h-1zM148 225h1v1h-1zM149 224h1v1h-1zM150 224h1v1h-1zM151 224h1v1h-1zM152 224h1v1h-1zM153 224h1v1h-1zM154 224h1v1h-1zM155 224h1v1h-1zM156 224h1v1h-1zM157 224h1v1h-1zM158 223h1v1h-1zM159 223h1v1h-1zM160 223h1v1h-1zM161 223h1v1h-1zM162 223h1v1h-1zM163 223h1v1h-1zM164 223h1v1h-1zM165 223h1v1h-1zM166 223h1v1h-1zM167 222h1v1h-1zM168 222h1v1h-1zM169 222h1v1h-1zM170 222h1v1h-1zM171 222h1v1h-1zM172 222h1v1h-1zM173 222h1v1h-1zM174 222h1v1h-1zM175 222h1v1h-1zM176 221h1v1h-1zM177 221h1v1h-1zM178 221h1v1h-1zM179 221h1v1h-1zM180 221h1v1h-1zM181 221h1v1h-1zM182 221h1v1h-1zM183 221h1v1h-1zM184 221h1v1h-1zM185 221h1v1h-1zM186 220h1v1h-1zM187 220h1v1h-1zM188 220h1v1h-1zM189 220h1v1h-1zM190 220h1v1h-1zM191 220h1v1h-1zM192 220h1v1h-1zM193 220h1v1h-1zM194 220h1v1h-1zM195 220h1v1h-1zM196 219h1v1h-1zM197 219h1v1h-1zM198 219h1v1h-1zM199 219h1v1h-1zM200 219h1v1h-1zM201 219h1v1h-1zM202 219h1v1h-1zM203 219h1v1h-1zM204 219h1v1h-1zM205 219h1v1h-1zM206 218h1v1h-1zM207 218h1v1h-1zM208 218h1v1h-1zM209 218h1v1h-1zM210 218h1v1h-1zM211 218h1v1h-1zM212 218h1v1h-1zM213 218h1v1h-1zM214 218h1v1h-1zM215 218h1v1h-1zM216 217h1v1h-1zM217 217h1v1h-1zM218 217h1v1h-1zM219 217h1v1h-1zM220 217h1v1h-1zM221 217h1v1h-1zM222 217h1v1h-1zM223 217h1v1h-1zM224 217h1v1h-1zM225 217h1v1h-1zM226 216h1v1h-1zM227 216h1v1h-1zM228 216h1v1h-1zM229 216h1v1h-1zM230 216h1v1h-1zM231 216h1v1h-1zM232 216h1v1h-1zM233 216h1v1h-1zM234 216h1v1h-1zM235 216h1v1h-1zM236 215h1v1h-1zM237 215h1v1h-1zM238 215h1v1h-1zM239 215h1v1h-1zM240 215h1v1h-1zM241 215h1v1h-1zM242 215h1v1h-1zM243 215h1v1h-1zM244 215h1v1h-1zM245 215h1v1h-1zM246 215h1v1h-1zM247 214h1v1h-1zM248 214h1v1h-1zM249 214h1v1h-1zM250 214h1v1h-1zM251 214h1v1h-1zM252 214h1v1h-1zM253 214h1v1h-1zM254 214h1v1h-1zM255 214h1v1h-1zM256 214h1v1h-1zM257 214h1v1h-1zM258 213h1v1h-1zM259 213h1v1h-1zM260 213h1v1h-1zM261 213h1v1h-1zM262 213h1v1h-1zM263 213h1v1h-1zM264 213h1v1h-1zM265 213h1v1h-1zM266 213h1v1h-1zM267 213h1v1h-1zM268 213h1v1h-1zM269 212h1v1h-1zM270 212h1v1h-1zM271 212h1v1h-1zM272 212h1v1h-1zM273 212h1v1h-1zM274 212h1v1h-1zM275 212h1v1h-1zM276 212h1v1h-1zM277 212h1v1h-1zM278 212h1v1h-1zM279 212h1v1h-1zM280 211h1v1h-1zM281 211h1v1h-1zM282 211h1v1h-1zM283 211h1v1h-1zM284 211h1v1h-1zM285 211h1v1h-1zM286 211h1v1h-1zM287 211h1v1h-1zM288 211h1v1h-1zM289 211h1v1h-1zM290 211h1v1h-1zM291 211h1v1h-1zM292 210h1v1h-1zM293 210h1v1h-1zM294 210h1v1h-1zM295 210h1v1h-1zM296 210h1v1h-1zM297 210h1v1h-1zM298 210h1v1h-1zM299 210h1v1h-1zM300 210h1v1h-1zM301 210h1v1h-1zM302 210h1v1h-1zM303 210h1v1h-1zM304 209h1v1h-1zM305 209h1v1h-1zM306 209h1v1h-1zM307 209h1v1h-1zM308 209h1v1h-1zM309 209h1v1h-1zM310 209h1v1h-1zM311 209h1v1h-1zM312 209h1v1h-1zM313 209h1v1h-1zM314 209h1v1h-1zM315 209h1v1h-1zM316 208h1v1h-1zM317 208h1v1h-1zM318 208h1v1h-1zM319 208h1v1h-1zM320 208h1v1h-1zM321 208h1v1h-1zM322 208h1v1h-1zM323 208h1v1h-1zM324 208h1v1h-1zM325 208h1v1h-1zM326 208h1v1h-1zM327 208h1v1h-1zM328 207h1v1h-1zM329 207h1v1h-1zM330 207h1v1h-1zM331 207h1v1h-1zM332 207h1v1h-1zM333 207h1v1h-1zM334 207h1v1h-1zM335 207h1v1h-1zM336 207h1v1h-1zM337 207h1v1h-1zM338 207h1v1h-1zM339 207h1v1h-1zM340 206h1v1h-1zM341 206h1v1h-1zM342 206h1v1h-1zM343 206h1v1h-1zM344 206h1v1h-1zM345 206h1v1h-1zM346 206h1v1h-1zM347 206h1v1h-1zM348 206h1v1h-1zM349 206h1v1h-1zM350 206h1v1h-1zM351 206h1v1h-1zM352 205h1v1h-1zM353 205h1v1h-1zM354 205h1v1h-1zM355 205h1v1h-1zM356 205h1v1h-1zM357 205h1v1h-1zM358 205h1v1h-1zM359 205h1v1h-1zM360 205h1v1h-1zM361 205h1v1h-1zM362 205h1v1h-1zM363 205h1v1h-1zM364 205h1v1h-1zM365 204h1v1h-1zM366 204h1v1h-1zM367 204h1v1h-1zM368 204h1v1h-1zM369 204h1v1h-1zM370 204h1v1h-1zM371 204h1v1h-1zM372 204h1v1h-1zM373 204h1v1h-1zM374 204h1v1h-1zM375 204h1v1h-1zM376 204h1v1h-1zM377 204h1v1h-1zM378 203h1v1h-1zM379 203h1v1h-1zM380 203h1v1h-1zM381 203h1v1h-1zM382 203h1v1h-1zM383 203h1v1h-1zM384 203h1v1h-1zM385 203h1v1h-1zM386 203h1v1h-1zM387 203h1v1h-1zM388 203h1v1h-1zM389 203h1v1h-1zM390 203h1v1h-1zM391 202h1v1h-1zM392 202h1v1h-1zM393 202h1v1h-1zM394 202h1v1h-1zM395 202h1v1h-1zM396 202h1v1h-1zM397 202h1v1h-1zM398 202h1v1h-1zM399 202h1v1h-1zM400 202h1v1h-1zM401 202h1v1h-1zM402 202h1v1h-1zM403 202h1v1h-1zM404 201h1v1h-1zM405 201h1v1h-1zM406 201h1v1h-1zM407 201h1v1h-1zM408 201h1v1h-1zM409 201h1v1h-1zM410 201h1v1h-1zM411 201h1v1h-1zM412 201h1v1h-1zM413 201h1v1h-1zM414 201h1v1h-1zM415 201h1v1h-1zM416 201h1v1h-1zM417 201h1v1h-1zM418 200h1v1h-1zM419 200h1v1h-1zM420 200h1v1h-1zM421 200h1v1h-1zM422 200h1v1h-1zM423 200h1v1h-1zM424 200h1v1h-1zM425 200h1v1h-1zM426 200h1v1h-1zM427 200h1v1h-1zM428 200h1v1h-1zM429 200h1v1h-1zM430 200h1v1h-1zM431 200h1v1h-1zM432 199h1v1h-1zM433 199h1v1h-1zM434 199h1v1h-1zM435 199h1v1h-1zM436 199h1v1h-1zM437 199h1v1h-1zM438 199h1v1h-1z" fill="#00d000" opacity="0.4"/><rect x="48" y="237" width="1" height="6" fill="#00d000"/><rect x="59" y="236" width="1" height="28" fill="#00d000"/><rect x="439" y="134" width="1" height="134" fill="#d8d8d8"/><rect x="46" y="294" width="422" height="137" fill="#000"/><rect x="48" y="296" width="418" height="134" fill="url(#cg)"/><rect x="46" y="294" width="1" height="1" fill="#e0e0e0"/><rect x="57" y="296" width="1" height="135" fill="#0000b0"/><rect x="66" y="296" width="1" height="135" fill="#0000b0"/><rect x="75" y="296" width="1" height="135" fill="#0000b0"/><rect x="85" y="296" width="1" height="135" fill="#0000b0"/><rect x="94" y="296" width="1" height="135" fill="#0000ff"/><rect x="103" y="296" width="1" height="135" fill="#0000b0"/><rect x="113" y="296" width="1" height="135" fill="#0000b0"/><rect x="122" y="296" width="1" height="135" fill="#0000b0"/><rect x="131" y="296" width="1" height="135" fill="#0000b0"/><rect x="140" y="296" width="1" height="135" fill="#0000ff"/><rect x="150" y="296" width="1" height="135" fill="#0000b0"/><rect x="159" y="296" width="1" height="135" fill="#0000b0"/><rect x="168" y="296" width="1" height="135" fill="#0000b0"/><rect x="178" y="296" width="1" height="135" fill="#0000b0"/><rect x="187" y="296" width="1" height="135" fill="#0000ff"/><rect x="196" y="296" width="1" height="135" fill="#0000b0"/><rect x="205" y="296" width="1" height="135" fill="#0000b0"/><rect x="215" y="296" width="1" height="135" fill="#0000b0"/><rect x="224" y="296" width="1" height="135" fill="#0000b0"/><rect x="233" y="296" width="1" height="135" fill="#0000ff"/><rect x="243" y="296" width="1" height="135" fill="#0000b0"/><rect x="252" y="296" width="1" height="135" fill="#0000b0"/><rect x="261" y="296" width="1" height="135" fill="#0000b0"/><rect x="270" y="296" width="1" height="135" fill="#0000b0"/><rect x="280" y="296" width="1" height="135" fill="#0000ff"/><rect x="289" y="296" width="1" height="135" fill="#0000b0"/><rect x="298" y="296" width="1" height="135" fill="#0000b0"/><rect x="308" y="296" width="1" height="135" fill="#0000b0"/><rect x="317" y="296" width="1" height="135" fill="#0000b0"/><rect x="326" y="296" width="1" height="135" fill="#0000ff"/><rect x="335" y="296" width="1" height="135" fill="#0000b0"/><rect x="345" y="296" width="1" height="135" fill="#0000b0"/><rect x="354" y="296" width="1" height="135" fill="#0000b0"/><rect x="363" y="296" width="1" height="135" fill="#0000b0"/><rect x="373" y="296" width="1" height="135" fill="#0000ff"/><rect x="382" y="296" width="1" height="135" fill="#0000b0"/><rect x="391" y="296" width="1" height="135" fill="#0000b0"/><rect x="400" y="296" width="1" height="135" fill="#0000b0"/><rect x="410" y="296" width="1" height="135" fill="#0000b0"/><rect x="419" y="296" width="1" height="135" fill="#0000ff"/><rect x="428" y="296" width="1" height="135" fill="#0000b0"/><rect x="438" y="296" width="1" height="135" fill="#0000b0"/><rect x="447" y="296" width="1" height="135" fill="#0000b0"/><rect x="456" y="296" width="1" height="135" fill="#0000b0"/><rect x="45" y="296" width="421" height="1" fill="#0000ff"/><rect x="47" y="310" width="419" height="1" fill="#0000b0"/><rect x="45" y="323" width="421" height="1" fill="#0000ff"/><rect x="47" y="336" width="419" height="1" fill="#0000b0"/><rect x="45" y="350" width="421" height="1" fill="#0000ff"/><rect x="47" y="363" width="419" height="1" fill="#0000b0"/><rect x="45" y="376" width="421" height="1" fill="#0000ff"/><rect x="47" y="390" width="419" height="1" fill="#0000b0"/><rect x="45" y="403" width="421" height="1" fill="#0000ff"/><rect x="47" y="416" width="419" height="1" fill="#0000b0"/><rect x="45" y="429" width="421" height="1" fill="#0000ff"/><rect x="48" y="416" width="1" height="14" fill="#58ff00"/><rect x="50" y="416" width="2" height="14" fill="#58ff00"/><rect x="55" y="416" width="1" height="14" fill="#58ff00"/><rect x="57" y="403" width="1" height="27" fill="#58ff00"/><rect x="61" y="336" width="1" height="94" fill="#58ff00"/><rect x="62" y="350" width="1" height="80" fill="#58ff00"/><rect x="63" y="416" width="1" height="14" fill="#58ff00"/><rect x="64" y="350" width="1" height="80" fill="#58ff00"/><rect x="65" y="376" width="1" height="54" fill="#58ff00"/><rect x="68" y="390" width="1" height="40" fill="#58ff00"/><rect x="75" y="376" width="1" height="54" fill="#58ff00"/><rect x="78" y="350" width="1" height="80" fill="#58ff00"/><rect x="84" y="416" width="1" height="14" fill="#58ff00"/><rect x="89" y="416" width="1" height="14" fill="#58ff00"/><rect x="105" y="390" width="1" height="40" fill="#58ff00"/><rect x="122" y="403" width="1" height="27" fill="#58ff00"/><rect x="124" y="416" width="1" height="14" fill="#58ff00"/><rect x="142" y="323" width="1" height="107" fill="#58ff00"/><rect x="165" y="390" width="1" height="40" fill="#58ff00"/><rect x="169" y="336" width="1" height="94" fill="#58ff00"/><rect x="170" y="350" width="3" height="80" fill="#58ff00"/><rect x="173" y="403" width="1" height="27" fill="#58ff00"/><rect x="176" y="416" width="1" height="14" fill="#58ff00"/><rect x="178" y="350" width="1" height="80" fill="#58ff00"/><rect x="184" y="403" width="1" height="27" fill="#58ff00"/><rect x="186" y="403" width="1" height="27" fill="#58ff00"/><rect x="200" y="350" width="1" height="80" fill="#58ff00"/><rect x="207" y="416" width="1" height="14" fill="#58ff00"/><rect x="215" y="416" width="1" height="14" fill="#58ff00"/><rect x="220" y="416" width="1" height="14" fill="#58ff00"/><rect x="232" y="416" width="1" height="14" fill="#58ff00"/><rect x="252" y="403" width="1" height="27" fill="#58ff00"/><rect x="258" y="416" width="1" height="14" fill="#58ff00"/><rect x="269" y="390" width="1" height="40" fill="#58ff00"/><rect x="287" y="416" width="1" height="14" fill="#58ff00"/><rect x="293" y="403" width="1" height="27" fill="#58ff00"/><rect x="305" y="403" width="1" height="27" fill="#58ff00"/><rect x="312" y="403" width="1" height="27" fill="#58ff00"/><rect x="316" y="363" width="1" height="67" fill="#58ff00"/><rect x="319" y="416" width="1" height="14" fill="#58ff00"/><rect x="324" y="416" width="2" height="14" fill="#58ff00"/><rect x="335" y="403" width="1" height="27" fill="#58ff00"/><rect x="346" y="416" width="1" height="14" fill="#58ff00"/><rect x="348" y="416" width="1" height="14" fill="#58ff00"/><rect x="351" y="403" width="1" height="27" fill="#58ff00"/><rect x="353" y="390" width="1" height="40" fill="#58ff00"/><rect x="355" y="416" width="1" height="14" fill="#58ff00"/><rect x="357" y="403" width="1" height="27" fill="#58ff00"/><rect x="360" y="416" width="1" height="14" fill="#58ff00"/><rect x="363" y="416" width="1" height="14" fill="#58ff00"/><rect x="375" y="416" width="1" height="14" fill="#58ff00"/><rect x="379" y="416" width="1" height="14" fill="#58ff00"/><rect x="385" y="403" width="1" height="27" fill="#58ff00"/><rect x="387" y="416" width="1" height="14" fill="#58ff00"/><rect x="392" y="416" width="1" height="14" fill="#58ff00"/><rect x="396" y="416" width="1" height="14" fill="#58ff00"/><rect x="414" y="416" width="1" height="14" fill="#58ff00"/><rect x="417" y="403" width="1" height="27" fill="#58ff00"/><rect x="421" y="416" width="1" height="14" fill="#58ff00"/><rect x="428" y="376" width="1" height="54" fill="#58ff00"/><rect x="429" y="350" width="1" height="80" fill="#58ff00"/><rect x="430" y="336" width="2" height="94" fill="#58ff00"/><rect x="432" y="323" width="1" height="107" fill="#58ff00"/><rect x="433" y="336" width="2" height="94" fill="#58ff00"/><rect x="435" y="376" width="2" height="54" fill="#58ff00"/><path d="M48,370.3 L49,376.5 L50,372.7 L51,371.8 L52,372.1 L53,370.5 L54,373.2 L55,374.2 L56,371.8 L57,371.2 L58,370.6 L59,373.2 L60,372.2 L61,371.1 L62,373.6 L63,373.1 L64,372.9 L65,370.0 L66,372.0 L67,373.0 L68,370.6 L69,373.4 L70,374.0 L71,373.5 L72,371.3 L73,371.3 L74,373.4 L75,373.5 L76,373.8 L77,373.8 L78,372.2 L79,371.8 L80,370.0 L81,373.3 L82,375.2 L83,371.8 L84,371.7 L85,373.2 L86,372.8 L87,370.7 L88,371.5 L89,371.0 L90,374.9 L91,371.5 L92,373.5 L93,374.8 L94,374.8 L95,374.2 L96,374.5 L97,370.9 L98,372.0 L99,371.6 L100,372.1 L101,375.7 L102,370.3 L103,373.1 L104,370.8 L105,374.0 L106,373.9 L107,371.7 L108,374.8 L109,372.3 L110,373.8 L111,372.6 L112,371.4 L113,371.6 L114,371.9 L115,372.8 L116,372.2 L117,374.9 L118,371.7 L119,371.3 L120,371.0 L121,370.9 L122,370.0 L123,370.6 L124,372.9 L125,371.8 L126,371.5 L127,372.1 L128,373.0 L129,372.4 L130,372.6 L131,370.9 L132,371.2 L133,370.5 L134,371.4 L135,370.4 L136,371.0 L137,371.2 L138,371.1 L139,371.0 L140,370.7 L141,372.9 L142,370.7 L143,369.8 L144,371.3 L145,369.6 L146,369.6 L147,371.0 L148,368.7 L149,366.7 L150,371.0 L151,371.9 L152,368.5 L153,369.4 L154,371.1 L155,367.9 L156,369.2 L157,368.7 L158,369.9 L159,367.6 L160,371.2 L161,369.8 L162,370.3 L163,369.4 L164,367.1 L165,369.5 L166,368.0 L167,369.6 L168,368.5 L169,369.1 L170,369.1 L171,370.3 L172,370.3 L173,368.0 L174,369.2 L175,371.0 L176,369.8 L177,368.2 L178,368.9 L179,368.6 L180,370.1 L181,369.0 L182,369.3 L183,371.6 L184,367.1 L185,367.5 L186,366.5 L187,366.7 L188,369.7 L189,368.9 L190,370.6 L191,366.0 L192,367.3 L193,370.2 L194,369.6 L195,369.4 L196,369.4 L197,368.3 L198,368.2 L199,368.2 L200,369.2 L201,367.9 L202,368.4 L203,369.8 L204,366.6 L205,367.0 L206,368.6 L207,367.6 L208,367.7 L209,370.5 L210,368.3 L211,367.3 L212,369.1 L213,370.9 L214,366.3 L215,366.8 L216,367.8 L217,366.8 L218,370.3 L219,368.2 L220,367.1 L221,368.1 L222,366.5 L223,366.7 L224,367.6 L225,370.4 L226,364.6 L227,367.9 L228,369.0 L229,368.2 L230,369.7 L231,367.8 L232,367.4 L233,367.0 L234,366.1 L235,369.2 L236,365.6 L237,366.9 L238,366.4 L239,366.0 L240,364.2 L241,366.5 L242,367.2 L243,367.2 L244,368.1 L245,366.8 L246,366.2 L247,367.4 L248,367.8 L249,365.9 L250,365.1 L251,365.7 L252,368.3 L253,368.2 L254,365.9 L255,367.1 L256,368.0 L257,368.7 L258,366.2 L259,366.7 L260,368.8 L261,370.0 L262,368.9 L263,365.6 L264,367.6 L265,366.6 L266,366.9 L267,366.2 L268,366.4 L269,367.0 L270,369.3 L271,367.9 L272,367.5 L273,367.0 L274,366.1 L275,366.7 L276,368.5 L277,367.9 L278,369.3 L279,367.1 L280,366.7 L281,364.6 L282,367.1 L283,364.4 L284,368.4 L285,365.7 L286,366.4 L287,364.6 L288,365.7 L289,365.1 L290,367.6 L291,366.4 L292,364.6 L293,363.6 L294,365.9 L295,365.3 L296,364.4 L297,366.5 L298,365.5 L299,365.8 L300,364.9 L301,364.8 L302,364.9 L303,363.4 L304,366.2 L305,365.8 L306,363.1 L307,365.4 L308,366.6 L309,365.4 L310,366.7 L311,364.7 L312,365.0 L313,363.3 L314,363.7 L315,362.5 L316,363.6 L317,365.0 L318,365.3 L319,366.0 L320,364.7 L321,363.2 L322,365.0 L323,364.2 L324,366.6 L325,366.7 L326,365.4 L327,362.7 L328,363.5 L329,364.3 L330,363.1 L331,364.6 L332,364.8 L333,364.9 L334,364.1 L335,362.6 L336,362.6 L337,363.5 L338,365.3 L339,365.5 L340,364.7 L341,363.9 L342,364.2 L343,364.4 L344,364.9 L345,364.3 L346,361.3 L347,364.3 L348,363.6 L349,362.5 L350,363.7 L351,363.3 L352,362.8 L353,360.7 L354,362.9 L355,363.4 L356,362.6 L357,360.7 L358,363.2 L359,363.4 L360,362.7 L361,363.0 L362,362.1 L363,361.7 L364,363.2 L365,362.1 L366,362.7 L367,366.6 L368,363.4 L369,362.7 L370,360.5 L371,362.6 L372,363.4 L373,361.6 L374,362.2 L375,359.7 L376,363.2 L377,361.8 L378,363.4 L379,364.2 L380,362.3 L381,363.7 L382,362.8 L383,362.2 L384,362.1 L385,361.4 L386,364.1 L387,363.6 L388,361.2 L389,363.6 L390,361.6 L391,360.7 L392,364.1 L393,361.1 L394,364.2 L395,363.1 L396,364.0 L397,363.6 L398,364.5 L399,363.5 L400,363.9 L401,363.5 L402,364.6 L403,362.9 L404,364.7 L405,365.4 L406,363.5 L407,364.2 L408,363.0 L409,363.4 L410,364.1 L411,363.4 L412,362.8 L413,363.9 L414,364.3 L415,364.5 L416,365.0 L417,362.0 L418,366.0 L419,364.1 L420,363.4 L421,364.0 L422,365.1 L423,365.7 L424,364.2 L425,364.9 L426,362.9 L427,365.2 L428,365.0 L429,364.8 L430,366.6 L431,367.9 L432,367.1 L433,365.0 L434,368.2 L435,366.1 L436,366.7 L437,366.3 L438,367.8 L439,368.2" fill="none" stroke="#ff10ff" stroke-width="1.6" shape-rendering="auto"/><rect x="439" y="296" width="1" height="134" fill="#d8d8d8"/></svg>
<div class="t r " style="right:600px;top:127px;color:#000;">100</div>
<div class="t r " style="right:600px;top:154px;color:#000;">80</div>
<div class="t r " style="right:600px;top:181px;color:#000;">60</div>
<div class="t r " style="right:600px;top:207px;color:#000;">40</div>
<div class="t r " style="right:600px;top:234px;color:#000;">20</div>
<div class="t r " style="right:600px;top:289px;color:#000;">10</div>
<div class="t r " style="right:600px;top:316px;color:#000;">8</div>
<div class="t r " style="right:600px;top:343px;color:#000;">6</div>
<div class="t r " style="right:600px;top:369px;color:#000;">4</div>
<div class="t r " style="right:600px;top:396px;color:#000;">2</div>
<div class="t " style="left:471px;top:244px;color:#000;">2</div>
<div class="t " style="left:471px;top:228px;color:#000;">4</div>
<div class="t " style="left:471px;top:211px;color:#000;">6</div>
<div class="t " style="left:471px;top:194px;color:#000;">8</div>
<div class="t " style="left:471px;top:178px;color:#000;">10</div>
<div class="t " style="left:471px;top:161px;color:#000;">12</div>
<div class="t " style="left:471px;top:144px;color:#000;">14</div>
<div class="t " style="left:471px;top:127px;color:#000;">16</div>
<div class="t " style="left:471px;top:289px;color:#000;">20</div>
<div class="t " style="left:471px;top:316px;color:#000;">16</div>
<div class="t " style="left:471px;top:343px;color:#000;">12</div>
<div class="t " style="left:471px;top:369px;color:#000;">8</div>
<div class="t " style="left:471px;top:396px;color:#000;">4</div>
<div class="t c" style="left:30.0px;width:40px;text-align:center;top:271px;">0.0</div>
<div class="t c" style="left:76.4px;width:40px;text-align:center;top:271px;">0.5</div>
<div class="t c" style="left:122.9px;width:40px;text-align:center;top:271px;">1.0</div>
<div class="t c" style="left:169.3px;width:40px;text-align:center;top:271px;">1.5</div>
<div class="t c" style="left:215.8px;width:40px;text-align:center;top:271px;">2.0</div>
<div class="t c" style="left:262.2px;width:40px;text-align:center;top:271px;">2.5</div>
<div class="t c" style="left:308.7px;width:40px;text-align:center;top:271px;">3.0</div>
<div class="t c" style="left:355.1px;width:40px;text-align:center;top:271px;">3.5</div>
<div class="t c" style="left:401.6px;width:40px;text-align:center;top:271px;">4.0</div>
<div class="t c" style="left:448.0px;width:40px;text-align:center;top:271px;">4.5</div>
<div class="t c" style="left:30.0px;width:40px;text-align:center;top:433px;">0.0</div>
<div class="t c" style="left:76.4px;width:40px;text-align:center;top:433px;">0.5</div>
<div class="t c" style="left:122.9px;width:40px;text-align:center;top:433px;">1.0</div>
<div class="t c" style="left:169.3px;width:40px;text-align:center;top:433px;">1.5</div>
<div class="t c" style="left:215.8px;width:40px;text-align:center;top:433px;">2.0</div>
<div class="t c" style="left:262.2px;width:40px;text-align:center;top:433px;">2.5</div>
<div class="t c" style="left:308.7px;width:40px;text-align:center;top:433px;">3.0</div>
<div class="t c" style="left:355.1px;width:40px;text-align:center;top:433px;">3.5</div>
<div class="t c" style="left:401.6px;width:40px;text-align:center;top:433px;">4.0</div>
<div class="t c" style="left:448.0px;width:40px;text-align:center;top:433px;">4.5</div>
<div class="a" style="left:491px;top:127px;width:137px;height:82px;border:1px solid #848484;box-shadow:1px 1px 0 #ffffff,inset 1px 1px 0 #ffffff;"></div>
<div class="t" style="left:498px;top:123px;padding:0 2px 0 3px;background:#e0e0e0;">Инф. о диске</div>
<div class="t " style="left:500px;top:137px;color:#000;">Тип:</div>
<div class="t " style="left:545px;top:137px;color:#00007c;">DVD-R</div>
<div class="t " style="left:500px;top:154px;color:#000;">ID:</div>
<div class="t " style="left:545px;top:154px;color:#00007c;">MCC 03RG20</div>
<div class="t " style="left:500px;top:172px;color:#000;">Дата:</div>
<div class="t " style="left:545px;top:172px;color:#00007c;">n/a</div>
<div class="t " style="left:500px;top:189px;color:#000;">Метка:</div>
<div class="t " style="left:545px;top:189px;color:#00007c;"></div>
<div class="a" style="left:491px;top:218px;width:137px;height:202px;border:1px solid #848484;box-shadow:1px 1px 0 #ffffff,inset 1px 1px 0 #ffffff;"></div>
<div class="t" style="left:498px;top:214px;padding:0 2px 0 3px;background:#e0e0e0;"><span style="letter-spacing:0.5px">Установки</span></div>
<div class="t " style="left:500px;top:228px;color:#000;">Скорость:</div>
<div class="a " style="left:500px;top:243px;width:83px;height:21px;box-shadow:inset -1px -1px 0 #ffffff,inset 1px 1px 0 #848484,inset -2px -2px 0 #ececf8,inset 2px 2px 0 #7a7a7a;background:#fff;"></div>
<div class="t " style="left:505px;top:247px;color:#000;">8 X</div>
<div class="a " style="left:565px;top:245px;width:16px;height:17px;box-shadow:inset -1px -1px 0 #7a7a7a,inset 1px 1px 0 #ffffff,inset -2px -2px 0 #848484,inset 2px 2px 0 #ececf8;background:#e0e0e0;"><svg class="a" style="left:5px;top:7px" width="7" height="4" viewBox="0 0 7 4" shape-rendering="crispEdges"><path d="M0 0h7v1h-1v1h-1v1h-1v1h-1v-1h-1v-1h-1v-1h-1z" fill="#000"/></svg></div>
<div class="a " style="left:592px;top:241px;width:23px;height:23px;box-shadow:inset -1px -1px 0 #7a7a7a,inset 1px 1px 0 #ffffff,inset -2px -2px 0 #848484,inset 2px 2px 0 #ececf8;background:#e0e0e0;"><svg class="a" style="left:4px;top:3px" width="14" height="16" viewBox="0 0 14 16">
<rect x="0.5" y="0.5" width="13" height="15" fill="#fff" stroke="#000" shape-rendering="crispEdges"/>
<path d="M3.5 6.8V4.6L4.6 3.5H8" fill="none" stroke="#008000" stroke-width="1.2"/><path d="M6.8 0.8L9.6 3.5L6.8 6.2Z" fill="#008000"/>
<path d="M10.5 8V10L9.4 11H6.5" fill="none" stroke="#008000" stroke-width="1.2"/><path d="M7.6 8.3L4.8 11L7.6 13.7Z" fill="#008000"/></svg></div>
<div class="t " style="left:502px;top:275px;color:#000;">Старт:</div>
<div class="a " style="left:554px;top:269px;width:60px;height:20px;box-shadow:inset -1px -1px 0 #ffffff,inset 1px 1px 0 #848484,inset -2px -2px 0 #ececf8,inset 2px 2px 0 #7a7a7a;background:#fff;"></div>
<div class="t " style="left:558px;top:272px;color:#000;">0000 MB</div>
<div class="t " style="left:502px;top:296px;color:#000;">Конец:</div>
<div class="a " style="left:554px;top:292px;width:60px;height:20px;box-shadow:inset -1px -1px 0 #ffffff,inset 1px 1px 0 #848484,inset -2px -2px 0 #ececf8,inset 2px 2px 0 #7a7a7a;background:#fff;"></div>
<div class="t " style="left:558px;top:295px;color:#000;">4319 MB</div>
<div class="a " style="left:502px;top:317px;width:13px;height:13px;box-shadow:inset -1px -1px 0 #ffffff,inset 1px 1px 0 #848484,inset -2px -2px 0 #ececf8,inset 2px 2px 0 #7a7a7a;background:#fff;background:#fff;"></div>
<div class="t " style="left:520px;top:318px;color:#000;">Быстр.скан.</div>
<div class="a " style="left:502px;top:338px;width:13px;height:13px;box-shadow:inset -1px -1px 0 #ffffff,inset 1px 1px 0 #848484,inset -2px -2px 0 #ececf8,inset 2px 2px 0 #7a7a7a;background:#fff;background:#fff;"><svg class="a" style="left:3px;top:3px" width="7" height="7" viewBox="0 0 7 7" shape-rendering="crispEdges"><path d="M0 2v3l2 2l5-5v-3l-5 5z" fill="#000"/></svg></div>
<div class="t " style="left:520px;top:338px;color:#000;">Отобр. C1/PIE</div>
<div class="a " style="left:502px;top:354px;width:13px;height:13px;box-shadow:inset -1px -1px 0 #ffffff,inset 1px 1px 0 #848484,inset -2px -2px 0 #ececf8,inset 2px 2px 0 #7a7a7a;background:#fff;background:#fff;"><svg class="a" style="left:3px;top:3px" width="7" height="7" viewBox="0 0 7 7" shape-rendering="crispEdges"><path d="M0 2v3l2 2l5-5v-3l-5 5z" fill="#000"/></svg></div>
<div class="t " style="left:520px;top:355px;color:#000;">Отобр. C2/PIF</div>
<div class="a " style="left:502px;top:371px;width:13px;height:13px;box-shadow:inset -1px -1px 0 #ffffff,inset 1px 1px 0 #848484,inset -2px -2px 0 #ececf8,inset 2px 2px 0 #7a7a7a;background:#fff;background:#fff;"><svg class="a" style="left:3px;top:3px" width="7" height="7" viewBox="0 0 7 7" shape-rendering="crispEdges"><path d="M0 2v3l2 2l5-5v-3l-5 5z" fill="#000"/></svg></div>
<div class="t " style="left:520px;top:371px;color:#000;">Отобр. Jitter</div>
<div class="a " style="left:502px;top:387px;width:13px;height:13px;box-shadow:inset -1px -1px 0 #ffffff,inset 1px 1px 0 #848484,inset -2px -2px 0 #ececf8,inset 2px 2px 0 #7a7a7a;background:#fff;background:#fff;"><svg class="a" style="left:3px;top:3px" width="7" height="7" viewBox="0 0 7 7" shape-rendering="crispEdges"><path d="M0 2v3l2 2l5-5v-3l-5 5z" fill="#000"/></svg></div>
<div class="t " style="left:520px;top:388px;color:#000;">Отобр. скор. чтения</div>
<div class="a " style="left:502px;top:403px;width:13px;height:13px;box-shadow:inset -1px -1px 0 #ffffff,inset 1px 1px 0 #848484,inset -2px -2px 0 #ececf8,inset 2px 2px 0 #7a7a7a;background:#fff;background:#e0e0e0;"><svg class="a" style="left:3px;top:3px" width="7" height="7" viewBox="0 0 7 7" shape-rendering="crispEdges"><path d="M0 2v3l2 2l5-5v-3l-5 5z" fill="#848484"/></svg></div>
<div class="t " style="left:521px;top:404px;color:#fff;">Отобр. скор. записи</div>
<div class="t " style="left:520px;top:403px;color:#848484;">Отобр. скор. записи</div>
<div class="a" style="left:491px;top:428px;width:137px;height:24px;border:1px solid #848484;box-shadow:1px 1px 0 #ffffff,inset 1px 1px 0 #ffffff;"></div>
<div class="t " style="left:502px;top:435px;color:#000;">Индекс</div>
<div class="t r " style="right:20px;top:435px;color:#00007c;">95</div>
<div class="a" style="left:491px;top:460px;width:137px;height:54px;border:1px solid #848484;box-shadow:1px 1px 0 #ffffff,inset 1px 1px 0 #ffffff;"></div>
<div class="t " style="left:502px;top:469px;color:#000;">Выполнено:</div>
<div class="t r " style="right:20px;top:469px;color:#00007c;">100 %</div>
<div class="t " style="left:502px;top:486px;color:#000;">Положение:</div>
<div class="t r " style="right:20px;top:486px;color:#00007c;">4318 MB</div>
<div class="t " style="left:502px;top:501px;color:#000;">Скорость:</div>
<div class="t r " style="right:20px;top:501px;color:#00007c;">8.15 X</div>
<div class="a" style="left:14px;top:460px;width:144px;height:54px;border:1px solid #848484;box-shadow:1px 1px 0 #ffffff,inset 1px 1px 0 #ffffff;"></div>
<div class="a" style="left:24px;top:455px;width:12px;height:13px;background:#e0e0e0"></div>
<div class="a" style="left:24px;top:457px;width:6px;height:6px;border:1px solid #000;background:#00ffff"></div>
<div class="t" style="left:35px;top:455px;padding:0 3px 0 0;background:#e0e0e0;">PI Errors</div>
<div class="t " style="left:23px;top:470px;color:#000;">Среднее:</div>
<div class="t r " style="right:490px;top:470px;color:#00007c;">28.09</div>
<div class="t " style="left:23px;top:485px;color:#000;">Максим.:</div>
<div class="t r " style="right:490px;top:485px;color:#00007c;">94</div>
<div class="t " style="left:23px;top:500px;color:#000;">Итого:</div>
<div class="t r " style="right:490px;top:500px;color:#00007c;">399754</div>
<div class="a" style="left:172px;top:460px;width:144px;height:54px;border:1px solid #848484;box-shadow:1px 1px 0 #ffffff,inset 1px 1px 0 #ffffff;"></div>
<div class="a" style="left:182px;top:455px;width:12px;height:13px;background:#e0e0e0"></div>
<div class="a" style="left:182px;top:457px;width:6px;height:6px;border:1px solid #000;background:#ffff00"></div>
<div class="t" style="left:193px;top:455px;padding:0 3px 0 0;background:#e0e0e0;">PI Failures</div>
<div class="t " style="left:182px;top:470px;color:#000;">Среднее:</div>
<div class="t r " style="right:331px;top:470px;color:#00007c;">0.21</div>
<div class="t " style="left:182px;top:485px;color:#000;">Максим.:</div>
<div class="t r " style="right:331px;top:485px;color:#00007c;">8</div>
<div class="t " style="left:182px;top:500px;color:#000;">Итого:</div>
<div class="t r " style="right:331px;top:500px;color:#00007c;">2510</div>
<div class="a" style="left:331px;top:460px;width:145px;height:41px;border:1px solid #848484;box-shadow:1px 1px 0 #ffffff,inset 1px 1px 0 #ffffff;"></div>
<div class="a" style="left:341px;top:455px;width:12px;height:13px;background:#e0e0e0"></div>
<div class="a" style="left:341px;top:457px;width:6px;height:6px;border:1px solid #000;background:#ff00ff"></div>
<div class="t" style="left:352px;top:455px;padding:0 3px 0 0;background:#e0e0e0;">Jitter</div>
<div class="t " style="left:340px;top:470px;color:#000;">Среднее:</div>
<div class="t r " style="right:173px;top:470px;color:#00007c;">8.96 %</div>
<div class="t " style="left:340px;top:485px;color:#000;">Максим.:</div>
<div class="t r " style="right:173px;top:485px;color:#00007c;">10.3 %</div>
<div class="t " style="left:340px;top:504px;color:#000;">Сбои PO:</div>
<div class="t r " style="right:173px;top:504px;color:#00007c;">0</div>
</div>
</body></html>
